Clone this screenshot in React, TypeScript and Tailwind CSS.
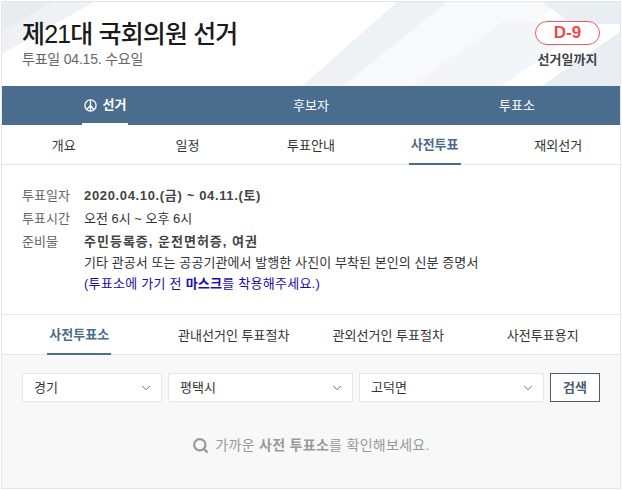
import { ChevronDown, Search } from "lucide-react";

const mainTabs = ["선거", "후보자", "투표소"];
const subTabs = ["개요", "일정", "투표안내", "사전투표", "재외선거"];
const guideTabs = ["사전투표소", "관내선거인 투표절차", "관외선거인 투표절차", "사전투표용지"];
const selects = [
  { label: "경기", width: "w-[140px]" },
  { label: "평택시", width: "w-[185px]" },
  { label: "고덕면", width: "w-[185px]" },
];

function HeaderBackground() {
  return (
    <svg className="absolute inset-0 w-full h-full" viewBox="0 0 618 84" preserveAspectRatio="none">
      <polygon points="0,0 92,0 0,52" fill="#eef2f5" />
      <polygon points="0,0 50,0 0,30" fill="#e6ecf0" />
      <polygon points="330,84 440,0 560,0 440,84" fill="#f7f9fa" />
      <polygon points="300,84 395,0 445,0 340,84" fill="#eef2f5" />
      <polygon points="410,84 500,20 590,20 500,84" fill="#f3f6f8" />
      <polygon points="540,84 618,30 618,84" fill="#e9eef2" />
      <polygon points="540,0 618,0 618,22 570,22" fill="#e9eef2" />
    </svg>
  );
}

function VoteMark() {
  return (
    <svg className="w-[13px] h-[13px]" viewBox="0 0 13 13" fill="none" stroke="white" strokeWidth="1.3">
      <circle cx="6.5" cy="6.5" r="5.6" />
      <path d="M6.5 1v11M6.5 6.5 2.6 10.5M6.5 6.5l3.4 4" />
    </svg>
  );
}

export default function App() {
  return (
    <div className="w-[622px] h-[490px] bg-white pt-[1px] pl-[1px] font-['Liberation_Sans','Noto_Sans_CJK_KR',sans-serif]">
      <div className="w-[620px] h-[488px] border border-[#e5e6e8] flex flex-col">
        <header className="relative h-[84px] shrink-0 bg-white overflow-hidden">
          <HeaderBackground />
          <div className="relative flex justify-between pl-5 pr-5 pt-[15px]">
            <div>
              <h1 className="text-[25px] leading-[34px] font-medium tracking-[-0.85px] text-[#1a1a1a]">제21대 국회의원 선거</h1>
              <p className="text-[14px] leading-[16px] text-[#666] tracking-[-0.2px]">투표일 04.15. 수요일</p>
            </div>
            <div className="flex flex-col items-center pt-[4px] w-[65px]">
              <span className="w-[65px] h-[24px] rounded-full border border-[#f4545c] bg-white text-[#f4454e] text-[17px] font-bold leading-[22px] text-center">D-9</span>
              <span className="mt-[7px] text-[13px] leading-[16px] font-bold text-[#444] whitespace-nowrap">선거일까지</span>
            </div>
          </div>
        </header>

        <nav className="grid grid-cols-3 h-[39px] shrink-0 bg-[#4a6d8e] text-white text-[13px]">
          {mainTabs.map((tab, i) => (
            <div key={tab} className="flex justify-center">
              <div className={`flex items-center gap-[6px] h-full pt-[1px] ${i === 0 ? "w-[46px] justify-center font-bold border-b-2 border-white" : ""}`}>
                {i === 0 && <VoteMark />}
                <span className="whitespace-nowrap">{tab}</span>
              </div>
            </div>
          ))}
        </nav>

        <nav className="grid grid-cols-5 h-[40px] shrink-0 border-b border-[#e5e6e8] text-[13px] text-[#333]">
          {subTabs.map((tab) => {
            const active = tab === "사전투표";
            return (
              <div key={tab} className="flex justify-center">
                <div className={`h-[40px] flex items-center justify-center pt-[1px] ${active ? "w-[52px] font-bold text-[#4a6d8e] border-b-2 border-[#4a6d8e]" : ""}`}>
                  {tab}
                </div>
              </div>
            );
          })}
        </nav>

        <section className="h-[150px] shrink-0 border-b border-[#e8e8e8] pl-5 pt-[20px] text-[13px] leading-[21px] text-[#333]">
          <div className="flex h-[23px]">
            <span className="w-[62px] text-[#666]">투표일자</span>
            <span className="font-bold text-[#444] tracking-[0.65px]">2020.04.10.(금) ~ 04.11.(토)</span>
          </div>
          <div className="flex h-[23px]">
            <span className="w-[62px] text-[#666]">투표시간</span>
            <span>오전 6시 ~ 오후 6시</span>
          </div>
          <div className="flex">
            <span className="w-[62px] text-[#666]">준비물</span>
            <div>
              <p className="font-bold text-[#444] tracking-[1px]">주민등록증, 운전면허증, 여권</p>
              <p className="tracking-[0.08px]">기타 관공서 또는 공공기관에서 발행한 사진이 부착된 본인의 신분 증명서</p>
              <p className="text-[#1a0dab] tracking-[0.25px]">
                (투표소에 가기 전 <b>마스크</b>를 착용해주세요.)
              </p>
            </div>
          </div>
        </section>

        <nav className="grid grid-cols-4 h-[40px] shrink-0 border-b border-[#e5e6e8] text-[13px] text-[#333]">
          {guideTabs.map((tab, i) => (
            <div key={tab} className="flex justify-center">
              <div className={`h-[40px] flex items-center justify-center whitespace-nowrap pt-[1px] ${i === 0 ? "w-[64px] font-bold text-[#4a6d8e] border-b-2 border-[#4a6d8e]" : ""}`}>
                {tab}
              </div>
            </div>
          ))}
        </nav>

        <section className="flex-1 bg-[#f8f8f8] pl-5 pt-[18px]">
          <div className="flex gap-[6px] h-[29px]">
            {selects.map((item) => (
              <div key={item.label} className={`${item.width} flex items-center justify-between bg-white border border-[#e5e6e8] pl-[11px] pr-2 text-[13px] text-[#333]`}>
                <span>{item.label}</span>
                <ChevronDown className="w-[14px] h-[14px] text-[#555]" strokeWidth={1.5} />
              </div>
            ))}
            <button className="w-[50px] border border-[#4d5d6e] bg-white text-[13px] font-bold text-[#4d5d6e]">검색</button>
          </div>
          <div className="flex items-center justify-center gap-[6px] pr-5 mt-[33px] text-[14px] tracking-[0.3px] text-[#999]">
            <Search className="w-[17px] h-[17px] text-[#999]" strokeWidth={3.2} />
            <span>
              가까운 <b>사전 투표소</b>를 확인해보세요.
            </span>
          </div>
        </section>
      </div>
    </div>
  );
}
